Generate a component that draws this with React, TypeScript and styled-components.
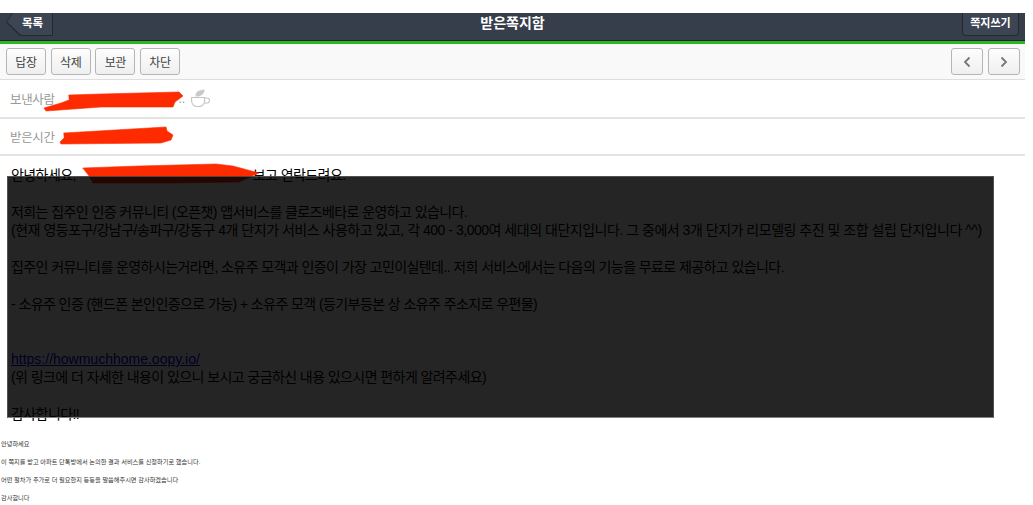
import React, {FC} from 'react';
import styled, {createGlobalStyle} from 'styled-components';

const GlobalStyle = createGlobalStyle`
  html, body {
    margin: 0;
    padding: 0;
    background: #fff;
  }

  body {
    font-family: "Liberation Sans", "Noto Sans CJK KR", sans-serif;
  }
`

const Page = styled.div`
  width: 1025px;
  height: 505px;
  padding-top: 13px;
  box-sizing: border-box;
`

const TopBar = styled.header`
  height: 28px;
  background-color: #363d4b;
  border-bottom: 3px solid #2db523;
  box-shadow: inset 0 -1px 0 #20252e;
  display: grid;
  grid-template-columns: 1fr auto 1fr;
  align-items: start;
  padding: 0 6px;
`

const BACK_SHAPE = 'polygon(6px 0, 100% 0, 100% 100%, 14px 100%, 0 40%)'

const BackButton = styled.div`
  position: relative;
  width: 47px;
  height: 23px;
  background: #232833;
  clip-path: ${BACK_SHAPE};
  color: #fff;
  font-size: 11.5px;
  font-weight: bold;
  line-height: 21px;
  padding-left: 6px;
  box-sizing: border-box;
  text-align: center;

  &::before {
    content: '';
    position: absolute;
    inset: 0 1px 1px 1px;
    background: #3d4453;
    clip-path: ${BACK_SHAPE};
  }

  span {
    position: relative;
  }
`

const Title = styled.h1`
  margin: 0;
  color: #fff;
  font-size: 14px;
  font-weight: bold;
  line-height: 20px;
`

const WriteButton = styled.div`
  justify-self: end;
  width: 57px;
  height: 23px;
  box-sizing: border-box;
  background: #3d4453;
  border: 1px solid #232833;
  border-top: 0;
  border-radius: 0 0 4px 4px;
  color: #fff;
  font-size: 11px;
  font-weight: bold;
  line-height: 20px;
  text-align: center;
`

const Toolbar = styled.div`
  height: 31px;
  background: #f9f9f9;
  border-bottom: 1px solid #dedede;
  display: flex;
  align-items: flex-start;
  justify-content: space-between;
  padding: 4px 5px 0 6px;
`

const ButtonGroup = styled.div`
  display: flex;
  gap: 4.7px;
`

const ToolButton = styled.div<{ $wide?: boolean }>`
  width: ${p => (p.$wide ? '40px' : '32px')};
  height: 27px;
  box-sizing: border-box;
  border: 1px solid #b5b5b5;
  border-radius: 3px;
  background: linear-gradient(#fdfdfd, #efefef);
  color: #444;
  font-size: 12px;
  letter-spacing: -0.3px;
  display: flex;
  align-items: center;
  justify-content: center;
`

const MetaRow = styled.div<{ $height: number }>`
  height: ${p => p.$height}px;
  border-bottom: 2px solid #e4e4e4;
  display: flex;
  align-items: center;
  padding-left: 10px;
  gap: 1px;
  color: #999;
  font-size: 12.5px;
  letter-spacing: -0.35px;
`

const Redacted = styled.span<{ $width: number }>`
  position: relative;
  display: inline-block;
  width: ${p => p.$width}px;
  height: 1em;
`

const Scribble = styled.svg`
  position: absolute;
  overflow: visible;
  fill: #ff2b00;
  stroke: #ff2b00;
  stroke-linecap: round;
  stroke-linejoin: round;
`

const NameScribble = styled(Scribble)`
  left: -12px;
  top: 0;
  width: 140px;
  height: 20px;
`

const TimeScribble = styled(Scribble)`
  left: 3px;
  top: -3px;
  width: 116px;
  height: 18px;
`

const LetterScribble = styled(Scribble)`
  left: 7px;
  top: -2px;
  width: 176px;
  height: 19px;
`

const CupIcon = styled.svg`
  width: 19px;
  height: 18px;
  margin: -1px 0 0 5px;
  fill: none;
  stroke: #c4c4c4;
  stroke-width: 1.1;
`

const Body = styled.div`
  position: relative;
  height: 279px;
  padding: 10px 0 0 11px;
  box-sizing: border-box;
  color: #000;
  font-size: 14px;
  letter-spacing: -0.58px;
  line-height: 18.4px;
  white-space: nowrap;
`

const Line = styled.div<{ $spacing?: number }>`
  min-height: 18.4px;
  ${p => (p.$spacing !== undefined ? `letter-spacing: ${p.$spacing}px;` : '')}
`

const LetterLink = styled.a`
  color: #0000ee;
  letter-spacing: 0;
  text-decoration: underline;
`

const Shade = styled.div`
  position: absolute;
  left: 7px;
  top: 20px;
  width: 987px;
  height: 242px;
  box-sizing: border-box;
  background: rgba(0, 0, 0, 0.855);
  border: 1px solid rgba(120, 120, 120, 0.55);
  border-bottom-color: rgba(170, 170, 170, 0.7);
`

const Footnote = styled.div`
  padding-left: 1px;
  color: #333;
  font-size: 6.2px;
  line-height: 18px;
  white-space: nowrap;
`

const Chevron: FC<{ d: string }> = ({d}) => (
    <svg width="8" height="12" viewBox="0 0 8 12" fill="none" stroke="#777" strokeWidth="1.8">
        <path d={d}/>
    </svg>
);

const App: FC = () => (
    <>
        <GlobalStyle/>
        <Page>
            <TopBar>
                <BackButton><span>목록</span></BackButton>
                <Title>받은쪽지함</Title>
                <WriteButton>쪽지쓰기</WriteButton>
            </TopBar>
            <Toolbar>
                <ButtonGroup>
                    <ToolButton $wide>답장</ToolButton>
                    <ToolButton $wide>삭제</ToolButton>
                    <ToolButton $wide>보관</ToolButton>
                    <ToolButton $wide>차단</ToolButton>
                </ButtonGroup>
                <ButtonGroup>
                    <ToolButton><Chevron d="M6.5 1.5L2 6l4.500 4.500"/></ToolButton>
                    <ToolButton><Chevron d="M1.500 1.500L6 6l-4.500 4.500"/></ToolButton>
                </ButtonGroup>
            </Toolbar>
            <MetaRow $height={37}>
                보낸사람
                <Redacted $width={122}>
                    <NameScribble viewBox="0 0 140 20">
                        <path d="M25 3L57 2 135 0l4 4-8 6-2 5-72 0-55 4-2-3 17-5 8-3z" strokeWidth="0.6"/>
                    </NameScribble>
                </Redacted>
                ..
                <CupIcon viewBox="0 0 19 18">
                    <path d="M.6 8.500h13v3.500a5.500 5.500 0 0 1-5.500 5.500h-2A5.500 5.500 0 0 1 .6 12z"/>
                    <path d="M13.600 9h2.400a2.200 2.200 0 0 1 0 5h-3"/>
                    <path d="M4.500 7.500C4 3.500 7.500.8 13.500.5 13.600 4.800 10 8 4.500 7.500z" fill="#c9c9c9" stroke="none"/>
                </CupIcon>
            </MetaRow>
            <MetaRow $height={35}>
                받은시간
                <Redacted $width={120}>
                    <TimeScribble viewBox="0 0 116 18">
                        <path d="M5 6L107 0l1 4 6 4-2 5-10 3-100 1-1-2 4-4z" strokeWidth="0.6"/>
                    </TimeScribble>
                </Redacted>
            </MetaRow>
            <Body>
                <Line>
                    안녕하세요,
                    <Redacted $width={177}>
                        <LetterScribble viewBox="0 0 176 19">
                            <path d="M0 4L56 2 133 0l17 2 26 7-20 9-66 1-80 0-4-7z" strokeWidth="0.6"/>
                        </LetterScribble>
                    </Redacted>
                    보고 연락드려요.
                </Line>
                <Line/>
                <Line>저희는 집주인 인증 커뮤니티 (오픈챗) 앱서비스를 클로즈베타로 운영하고 있습니다.</Line>
                <Line $spacing={-0.48}>(현재 영등포구/강남구/송파구/강동구 4개 단지가 서비스 사용하고 있고, 각 400 - 3,000여 세대의 대단지입니다. 그 중에서 3개 단지가 리모델링 추진 및 조합 설립 단지입니다 ^^)</Line>
                <Line/>
                <Line>집주인 커뮤니티를 운영하시는거라면, 소유주 모객과 인증이 가장 고민이실텐데.. 저희 서비스에서는 다음의 기능을 무료로 제공하고 있습니다.</Line>
                <Line/>
                <Line>- 소유주 인증 (핸드폰 본인인증으로 가능) + 소유주 모객 (등기부등본 상 소유주 주소지로 우편물)</Line>
                <Line/>
                <Line/>
                <Line><LetterLink href="#">https://howmuchhome.oopy.io/</LetterLink></Line>
                <Line>(위 링크에 더 자세한 내용이 있으니 보시고 궁금하신 내용 있으시면 편하게 알려주세요)</Line>
                <Line/>
                <Line>감사합니다!!</Line>
                <Shade/>
            </Body>
            <Footnote>안녕하세요</Footnote>
            <Footnote>이 쪽지를 받고 아파트 단톡방에서 논의한 결과 서비스를 신청하기로 했습니다.</Footnote>
            <Footnote>어떤 절차가 추가로 더 필요한지 등등을 말씀해주시면 감사하겠습니다</Footnote>
            <Footnote>감사합니다</Footnote>
        </Page>
    </>
);

export default App;
